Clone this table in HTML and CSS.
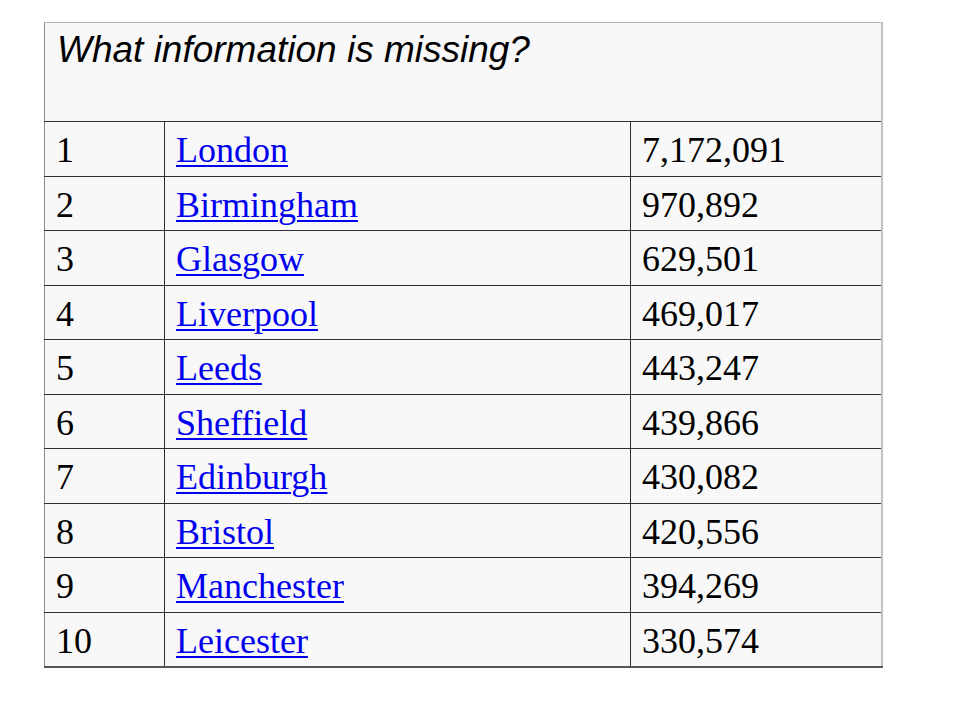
FILE: index.html
```html
<!DOCTYPE html>
<html>
<head>
<meta charset="utf-8">
<link rel="stylesheet" href="styles.css">
</head>
<body>
<table class="cities">
  <colgroup>
    <col class="c-rank">
    <col class="c-city">
    <col class="c-pop">
  </colgroup>
  <tr class="head-row"><td colspan="3" class="question">What information is missing?</td></tr>
  <tr><td>1</td><td><a href="#">London</a></td><td>7,172,091</td></tr>
  <tr><td>2</td><td><a href="#">Birmingham</a></td><td>970,892</td></tr>
  <tr><td>3</td><td><a href="#">Glasgow</a></td><td>629,501</td></tr>
  <tr><td>4</td><td><a href="#">Liverpool</a></td><td>469,017</td></tr>
  <tr><td>5</td><td><a href="#">Leeds</a></td><td>443,247</td></tr>
  <tr><td>6</td><td><a href="#">Sheffield</a></td><td>439,866</td></tr>
  <tr><td>7</td><td><a href="#">Edinburgh</a></td><td>430,082</td></tr>
  <tr><td>8</td><td><a href="#">Bristol</a></td><td>420,556</td></tr>
  <tr><td>9</td><td><a href="#">Manchester</a></td><td>394,269</td></tr>
  <tr><td>10</td><td><a href="#">Leicester</a></td><td>330,574</td></tr>
</table>
</body>
</html>
```

FILE: styles.css
```css
html, body {
  margin: 0;
  padding: 0;
  background: #ffffff;
}

body {
  padding: 22px 0 0 44px;
}

.cities {
  border-collapse: collapse;
  width: 837px;
  table-layout: fixed;
  background: #f8f8f8;
  border-top: 1px solid #b4b4b4;
  border-left: 1px solid #8a8a8a;
  border-right: 2px solid #c0c0c0;
  border-bottom: 2px solid #555555;
  font-family: "Liberation Serif", "Times New Roman", serif;
  font-size: 36px;
  color: #000;
}

.c-rank { width: 120px; }
.c-city { width: 466px; }
.c-pop { width: 251px; }

.cities tr {
  height: 54.5px;
}

.cities td {
  padding: 8px 10px 0 11px;
  line-height: 40px;
  vertical-align: top;
  border-top: 1px solid #2e2e2e;
  border-left: 1px solid #2e2e2e;
  white-space: nowrap;
}

.cities td:first-child {
  border-left: none;
}

.cities tr.head-row {
  height: 99px;
}

.cities td.question {
  border-top: none;
  font-family: "Liberation Sans", Arial, sans-serif;
  font-style: italic;
  font-size: 37px;
  padding: 7px 12px 0 12px;
}

.cities a {
  color: #0000ee;
  text-decoration: underline;
  text-decoration-thickness: 2px;
  text-underline-offset: 3px;
}
```
